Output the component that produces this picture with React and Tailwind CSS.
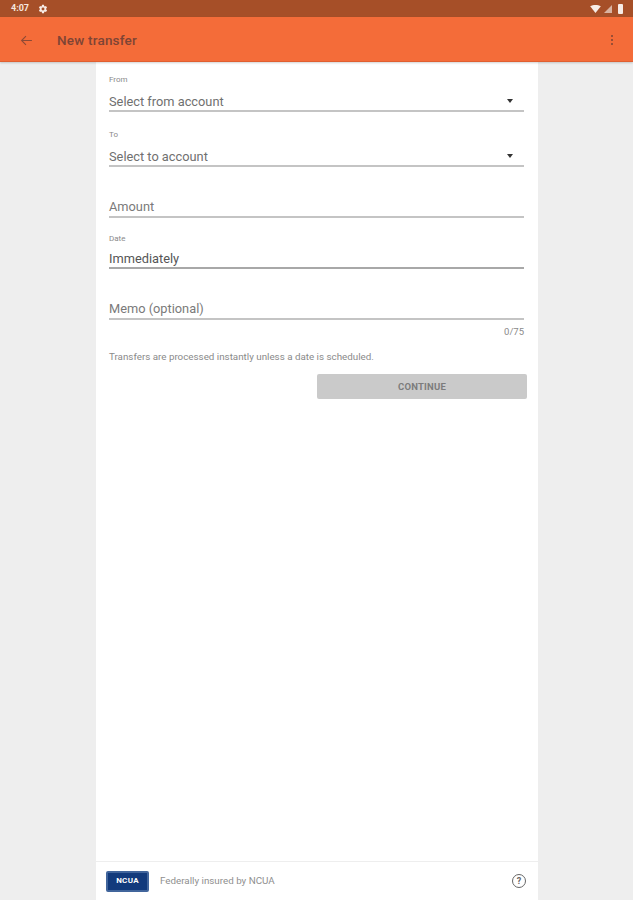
const fieldText = 'h-[18px] text-[12.8px] leading-[20px]'

function SelectField({ label, value, className }) {
  return (
    <div className={className}>
      <div className="h-[12px] text-[8px] leading-[12px] text-[#8a8a8a]">{label}</div>
      <div className="mt-[6px] flex h-[20px] items-center justify-between border-b-2 border-[#c4c4c4] pr-[11px]">
        <span className={`${fieldText} text-[#707070]`}>{value}</span>
        <span className="h-0 w-0 border-x-[3.5px] border-t-[4px] border-x-transparent border-t-[#333333]" />
      </div>
    </div>
  )
}

function TextField({ children, className, line = 'border-[#c4c4c4]', color = 'text-[#7a7a7a]' }) {
  return (
    <div className={`border-b-2 ${line} ${className}`}>
      <div className={`${fieldText} ${color}`}>{children}</div>
    </div>
  )
}

export default function App() {
  return (
    <div className="flex h-[900px] flex-col overflow-hidden bg-[#eeeeee] font-['Roboto',sans-serif]">
      <div className="flex h-[17px] items-center justify-between bg-[#a64f28] pl-[11px] pr-[10px]">
        <div className="flex items-center gap-[9px]">
          <span className="text-[9px] font-bold leading-none text-[#f5e6df]">4:07</span>
          <svg width="10" height="10" viewBox="0 0 24 24" fill="#f7ece6">
            <path d="M19.4 13c.04-.33.06-.66.06-1s-.02-.67-.07-1l2.11-1.65a.5.5 0 0 0 .12-.64l-2-3.46a.5.5 0 0 0-.61-.22l-2.49 1a7.3 7.3 0 0 0-1.69-.98l-.38-2.65A.49.49 0 0 0 14 2h-4a.49.49 0 0 0-.49.42l-.38 2.65c-.61.25-1.17.59-1.69.98l-2.49-1a.5.5 0 0 0-.61.22l-2 3.46a.5.5 0 0 0 .12.64L4.57 11c-.05.33-.07.67-.07 1s.02.67.07 1l-2.11 1.65a.5.5 0 0 0-.12.64l2 3.46c.12.22.39.3.61.22l2.49-1c.52.4 1.08.73 1.69.98l.38 2.65c.05.24.26.42.49.42h4c.25 0 .45-.18.49-.42l.38-2.65c.61-.25 1.17-.59 1.69-.98l2.49 1c.22.08.49 0 .61-.22l2-3.46a.5.5 0 0 0-.12-.64L19.4 13zM12 15.5a3.5 3.5 0 1 1 0-7 3.5 3.5 0 0 1 0 7z" />
          </svg>
        </div>
        <div className="flex items-center gap-[3px]">
          <svg width="11" height="8" viewBox="0 0 12 9" fill="#f7ece6"><path d="M0 1.5C3.5-.5 8.5-.5 12 1.5L6 9z" /></svg>
          <svg width="8" height="8" viewBox="0 0 8 8" fill="#d9b3a1"><path d="M8 0v8H0z" /></svg>
          <span className="ml-[3px] h-[10px] w-[5px] rounded-[1px] bg-[#f7ece6]" />
        </div>
      </div>

      <div className="z-10 flex h-[45px] items-center border-b border-[#e05f30] bg-[#f46c39] pl-[20px] pr-[20px] pt-[2px] shadow-[0_1px_2px_rgba(0,0,0,0.18)]">
        <svg width="13" height="13" viewBox="0 0 24 24" fill="none" stroke="#8c4a35" strokeWidth="2">
          <path d="M22 12H3M11 4l-8 8 8 8" />
        </svg>
        <span className="ml-[24px] text-[13.5px] font-medium tracking-[0.2px] text-[#7d4435]">New transfer</span>
        <div className="ml-auto flex flex-col gap-[2px]">
          <span className="h-[2px] w-[2px] rounded-full bg-[#7d4435]" />
          <span className="h-[2px] w-[2px] rounded-full bg-[#7d4435]" />
          <span className="h-[2px] w-[2px] rounded-full bg-[#7d4435]" />
        </div>
      </div>

      <div className="flex min-h-0 flex-1 justify-center pl-[1px]">
        <div className="flex w-[442px] flex-col bg-white">
          <div className="flex-1 pl-[13px] pr-[14px] pt-[12px]">
            <SelectField label="From" value="Select from account" />
            <SelectField label="To" value="Select to account" className="mt-[17px]" />
            <TextField className="mt-[30px] pb-[1px]">Amount</TextField>
            <div className="mt-[15px] h-[12px] text-[8px] leading-[12px] text-[#8a8a8a]">Date</div>
            <TextField className="mt-[4px]" line="border-[#a8a8a8]" color="text-[#555555]">Immediately</TextField>
            <TextField className="mt-[30px] pb-[1px]">Memo (optional)</TextField>
            <div className="mt-[6px] text-right text-[9.5px] leading-[12px] text-[#8a8a8a]">0/75</div>
            <div className="mt-[13px] text-[9.8px] leading-[12px] text-[#8a8a8a]">Transfers are processed instantly unless a date is scheduled.</div>
            <div className="-mr-[3px] mt-[11px] flex justify-end">
              <button className="h-[25px] w-[210px] rounded-[2px] bg-[#cacaca] pt-[2px] text-[9.5px] font-bold tracking-[0.2px] text-[#7c7c7c]">
                CONTINUE
              </button>
            </div>
          </div>

          <div className="flex h-[39px] items-center border-t border-[#eeeeee] pl-[10px] pr-[12px]">
            <div className="flex h-[21px] w-[43px] items-center justify-center rounded-[2px] border-2 border-[#41659c] bg-[#123a7c] text-[8px] font-bold tracking-[0.3px] text-white">
              NCUA
            </div>
            <span className="ml-[11px] text-[9.8px] text-[#8f8f8f]">Federally insured by NCUA</span>
            <div className="ml-auto flex h-[14px] w-[14px] items-center justify-center rounded-full border-[1.5px] border-[#666666] text-[9px] font-bold leading-none text-[#666666]">
              ?
            </div>
          </div>
        </div>
      </div>
    </div>
  )
}
